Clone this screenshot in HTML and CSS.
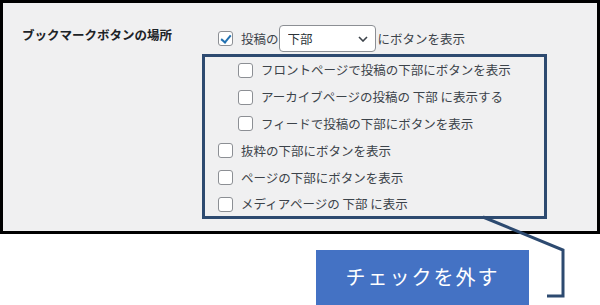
FILE: index.html
```html
<!DOCTYPE html>
<html lang="ja">
<head>
    <meta charset="UTF-8">
    <title>ブックマークボタンの場所</title>
    <link rel="stylesheet" href="styles.css">
</head>
<body>
    <div class="settings">
        <div class="settings-label">ブックマークボタンの場所</div>
        <div class="settings-fields">
            <div class="row row-main">
                <input type="checkbox" checked>
                <span>投稿の</span>
                <span class="select-wrap">
                    <select>
                        <option>下部</option>
                        <option>上部</option>
                    </select>
                    <svg class="chevron" width="10" height="6" viewBox="0 0 10 6"><path d="M1 1l4 4 4-4" fill="none" stroke="#3c434a" stroke-width="1.6"/></svg>
                </span>
                <span class="after-select">にボタンを表示</span>
            </div>
            <div class="highlight">
                <label class="row sub"><input type="checkbox"><span>フロントページで投稿の下部にボタンを表示</span></label>
                <label class="row sub"><input type="checkbox"><span>アーカイブページの投稿の 下部 に表示する</span></label>
                <label class="row sub"><input type="checkbox"><span>フィードで投稿の下部にボタンを表示</span></label>
                <label class="row"><input type="checkbox"><span>抜粋の下部にボタンを表示</span></label>
                <label class="row"><input type="checkbox"><span>ページの下部にボタンを表示</span></label>
                <label class="row"><input type="checkbox"><span>メディアページの 下部 に表示</span></label>
            </div>
        </div>
    </div>

    <div class="callout">チェックを外す</div>

    <!-- 吹き出しの線 -->
    <svg class="connector" width="600" height="305" viewBox="0 0 600 305">
        <polyline points="483,217 563,250 563,296 547,296" fill="none" stroke="#2d4a70" stroke-width="3"/>
    </svg>
</body>
</html>
```

FILE: styles.css
```css
body {
    margin: 0;
    padding: 0;
    background: #fff;
    font-family: "Noto Sans CJK JP", "Noto Sans", sans-serif;
    color: #3c434a;
    position: relative;
    width: 600px;
    height: 305px;
    overflow: hidden;
}

/* Panneau réglages */
.settings {
    box-sizing: border-box;
    width: 600px;
    height: 234px;
    border: 3px solid #000;
    background: #f0f0f1;
    display: flex;
}

.settings-label {
    width: 180px;
    padding: 19px 0 0 19px;
    font-size: 12.5px;
    font-weight: bold;
    color: #1d2327;
    line-height: 26px;
}

.settings-fields {
    padding-top: 22px;
}

.row {
    display: flex;
    align-items: center;
    font-size: 12.5px;
    line-height: 16px;
}

.row-main {
    height: 27px;
    padding-left: 16px;
    margin-bottom: 2px;
}

.row-main input {
    margin-right: 8px;
}

.after-select {
    margin-left: 2px;
}

/* Cases à cocher */
input[type="checkbox"] {
    appearance: none;
    -webkit-appearance: none;
    box-sizing: border-box;
    width: 15px;
    height: 15px;
    margin: 0 8px 0 0;
    border: 1px solid #8c8f94;
    border-radius: 3px;
    background: #fff;
    position: relative;
    flex-shrink: 0;
}

input[type="checkbox"]:checked::before {
    content: "";
    position: absolute;
    left: 4px;
    top: 1px;
    width: 4px;
    height: 8px;
    border: solid #2271b1;
    border-width: 0 2px 2px 0;
    transform: rotate(40deg);
}

/* Liste déroulante */
.select-wrap {
    position: relative;
    display: inline-block;
}

.select-wrap select {
    appearance: none;
    -webkit-appearance: none;
    box-sizing: border-box;
    width: 97px;
    height: 27px;
    padding: 0 0 0 8px;
    border: 1px solid #8c8f94;
    border-radius: 4px;
    background: #fff;
    font-family: inherit;
    font-size: 12.5px;
    color: #2c3338;
}

.chevron {
    position: absolute;
    right: 8px;
    top: 11px;
    pointer-events: none;
}

/* Cadre bleu */
.highlight {
    box-sizing: border-box;
    width: 345px;
    height: 165px;
    border: 3px solid #2d4a70;
    margin-left: 0;
    padding-left: 13px;
}

.highlight .row {
    height: 26.8px;
}

.highlight .row.sub {
    padding-left: 20px;
}

/* Bouton bleu */
.callout {
    margin: 16px 0 0 316px;
    width: 213px;
    height: 60px;
    background: #4472c4;
    color: #fff;
    font-size: 20px;
    letter-spacing: 2px;
    line-height: 54px;
    text-align: center;
}

.connector {
    position: absolute;
    left: 0;
    top: 0;
    pointer-events: none;
}
```
